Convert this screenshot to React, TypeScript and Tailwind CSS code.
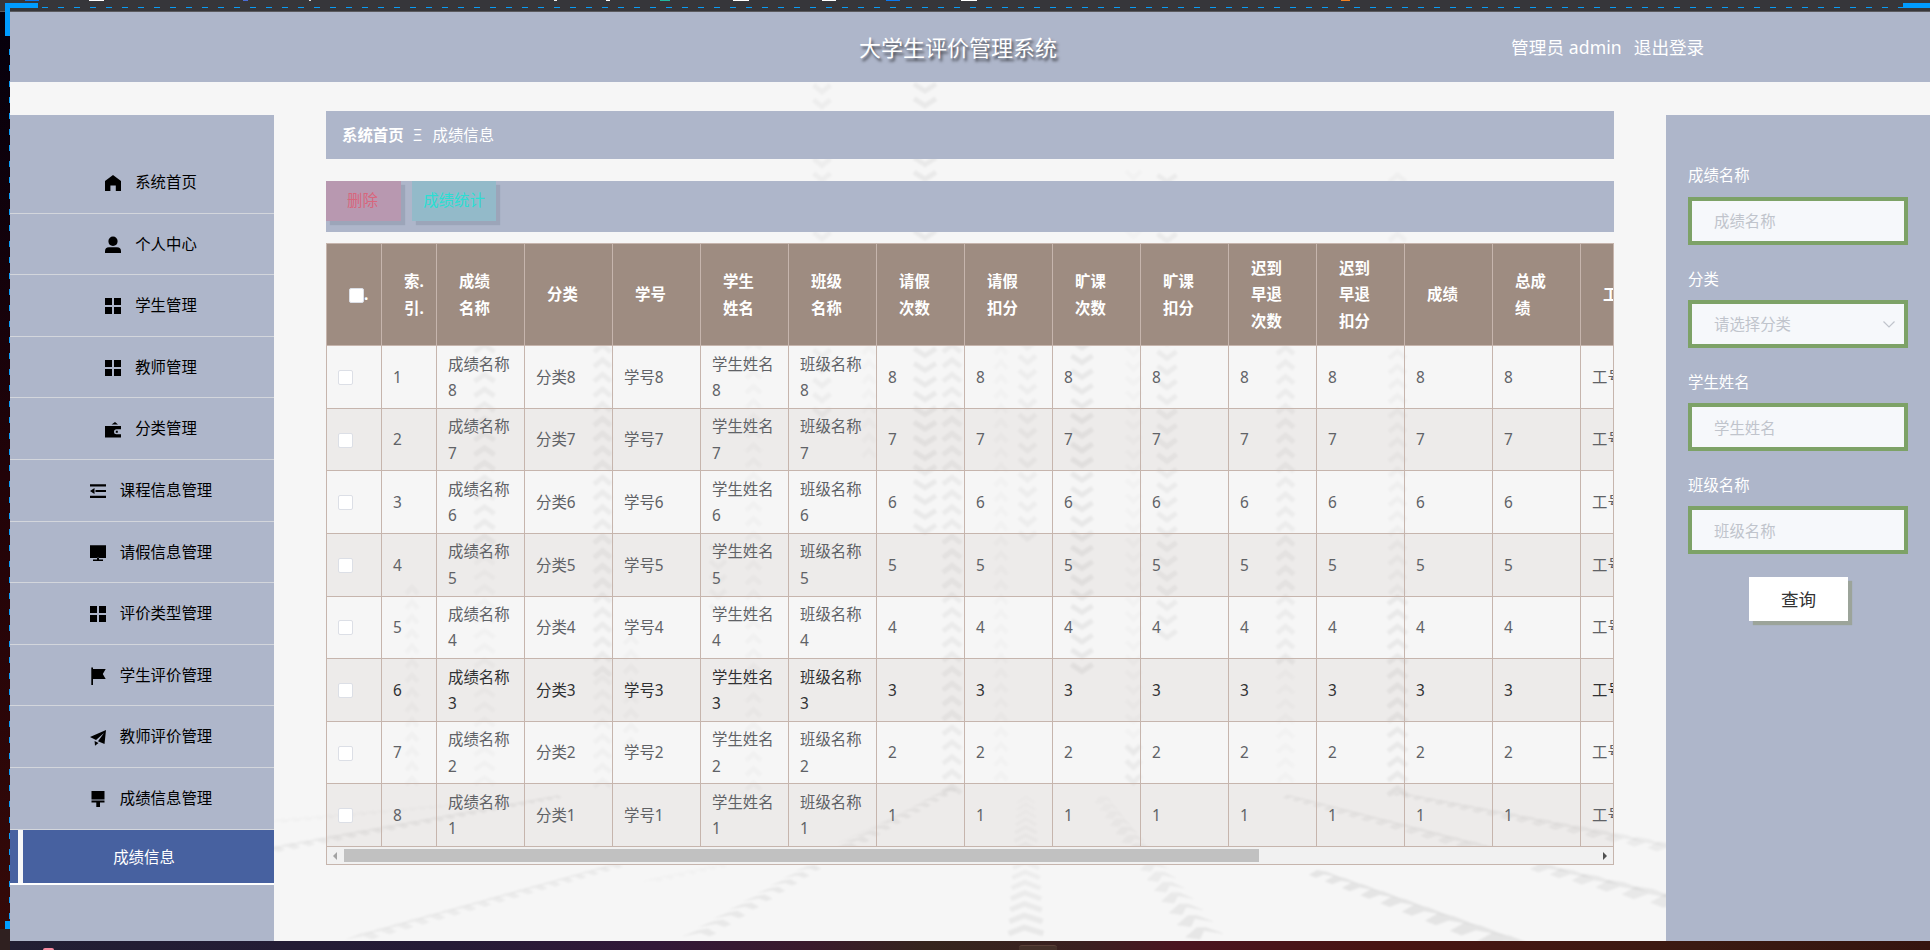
import { useState } from "react";
import type { ReactNode } from "react";

type MenuItem = { label: string; icon: ReactNode };

const grid = <path d="M0 0h7v7H0zM9 0h7v7H9zM0 9h7v7H0zM9 9h7v7H9z" />;

const menu: MenuItem[] = [
    { label: "系统首页", icon: <path d="M8 0 16 6V16H10.8V10.6H5.4V16H0V6Z" /> },
    {
        label: "个人中心",
        icon: <path d="M8-.5a4.600 4.600 0 0 1 4.600 4.800c0 2.800-1.900 4.700-4.600 4.700S3.400 7.100 3.400 4.300A4.600 4.600 0 0 1 8-.5ZM4 10.200h8a4 4 0 0 1 4 4V16H0v-1.800a4 4 0 0 1 4-4Z" />,
    },
    { label: "学生管理", icon: grid },
    { label: "教师管理", icon: grid },
    {
        label: "分类管理",
        icon: <path d="M6.500 2.500 10 0 13 2.500ZM0 4h16v3.300h-4.500a2.500 2.500 0 0 0 0 5H16V15.500H0ZM10.800 8.800h2v2h-2Z" />,
    },
    {
        label: "课程信息管理",
        icon: <path d="M0 1.300h16v2.200H0zM5.500 7h10.500v2H5.500zM0 12.700h16v2.200H0zM0 8 4.500 5V11Z" />,
    },
    { label: "请假信息管理", icon: <path d="M0 .3h16v12.700H0zM7 12.800h2v1.700h4V16H3v-1.500h4z" /> },
    { label: "评价类型管理", icon: grid },
    { label: "学生评价管理", icon: <path d="M1.300-.5H3V1H15.700L12.800 6 15.700 11H3V17H1.300Z" /> },
    { label: "教师评价管理", icon: <path d="M16 0 14.500 14 8 11.300 14 3 6 10 0 7ZM4.600 11 8.500 13 5 15.800Z" /> },
    { label: "成绩信息管理", icon: <path d="M1.500 0h13v8.500h-13zM1.500 9.500h13v2h-4.500V16H6.300v-4.500H1.500z" /> },
];

const headers = [
    ["成绩", "名称"],
    ["分类"],
    ["学号"],
    ["学生", "姓名"],
    ["班级", "名称"],
    ["请假", "次数"],
    ["请假", "扣分"],
    ["旷课", "次数"],
    ["旷课", "扣分"],
    ["迟到", "早退", "次数"],
    ["迟到", "早退", "扣分"],
    ["成绩"],
    ["总成", "绩"],
    ["工号"],
];

const rows = [8, 7, 6, 5, 4, 3, 2, 1];

// x, first y, last y, width, direction (1 = down, -1 = up), opacity
const columns: number[][] = [
    [822, 89, 440, 17, 1, 0.035],
    [925, 88, 535, 22, 1, 0.05],
    [484.5, 348, 560, 20, -1, 0.045],
    [484.5, 560, 790, 20, -1, 0.018],
    [602.5, 348, 680, 17, -1, 0.045],
    [602.5, 680, 790, 17, -1, 0.022],
    [753.5, 345, 790, 15, -1, 0.02],
    [869, 350, 465, 13, -1, 0.015],
    [952, 348, 795, 18, -1, 0.045],
    [412, 590, 790, 12, -1, 0.018],
    [718, 550, 615, 16, 1, 0.025],
    [631, 640, 755, 14, -1, 0.018],
    [1001, 350, 785, 13, -1, 0.016],
    [1027.5, 345, 548, 17, 1, 0.035],
    [1082, 345, 672, 21, 1, 0.055],
    [1133.5, 175, 750, 15, 1, 0.014],
    [1133.5, 750, 792, 15, 1, 0.045],
    [1167, 179, 645, 19, 1, 0.045],
    [1285.5, 350, 660, 17, -1, 0.04],
    [1285.5, 660, 790, 17, -1, 0.016],
    [1397.5, 178, 600, 17, -1, 0.026],
    [1397.5, 600, 792, 19, -1, 0.05],
];

// x1, y1, x2, y2, mark size at start, at end, opacity
const trails: number[][] = [
    [560, 797, 276, 850, 14, 26, 0.035],
    [460, 805, 276, 822, 14, 20, 0.012],
    [620, 866, 360, 940, 20, 30, 0.035],
    [725, 866, 660, 880, 16, 20, 0.014],
    [955, 790, 820, 866, 16, 24, 0.04],
    [818, 868, 700, 940, 22, 30, 0.045],
    [905, 815, 845, 845, 14, 18, 0.014],
    [1285, 797, 1480, 850, 16, 34, 0.035],
    [1395, 794, 1670, 850, 16, 40, 0.035],
    [1313, 874, 1490, 942, 28, 52, 0.06],
    [1535, 868, 1700, 912, 34, 60, 0.045],
];

function Backdrop() {
    const marks: ReactNode[] = [];

    columns.forEach(([x, y1, y2, w, dir, opacity], c) => {
        for (let y = y1, i = 0; y <= y2; y += 14.7, i++) {
            const h = w / 2;
            marks.push(
                <path
                    key={`c${c}-${i}`}
                    d={`M${x - h} ${y - dir * 4}L${x} ${y + dir * 3}L${x + h} ${y - dir * 4}`}
                    strokeWidth={5}
                    opacity={opacity}
                />
            );
        }
    });

    // slanted tracks: a heavy heel with a thin streak leading away from it
    trails.forEach(([x1, y1, x2, y2, s1, s2, opacity], t) => {
        const length = Math.hypot(x2 - x1, y2 - y1);
        const sign = x2 > x1 ? 1 : -1;
        for (let d = 0, i = 0; d < length; i++) {
            const k = d / length;
            const s = s1 + (s2 - s1) * k;
            const x = x1 + (x2 - x1) * k;
            const y = y1 + (y2 - y1) * k;
            const p = (dx: number, dy: number) => `${x + sign * s * dx} ${y + s * dy}`;
            marks.push(
                <path
                    key={`t${t}-${i}`}
                    d={`M${p(-0.15, 0.03)}L${p(0.15, -0.14)}L${p(0.5, -0.08)}L${p(1.05, 0.14)}L${p(0.4, 0.02)}L${p(0.1, 0.13)}Z`}
                    fill="#000"
                    stroke="none"
                    opacity={opacity * 1.2}
                />
            );
            d += s * 0.62;
        }
    });

    // the two tracks running towards the viewer
    for (let i = 0, y = 800; y < 940; i++) {
        const k = (y - 800) / 140;
        const h = 9 + 9 * k;
        marks.push(
            <path key={`m${i}`} d={`M${1026 - h} ${y + 3}L${1026 - k * 2} ${y - 3}L${1026 + h} ${y + 3}`} strokeWidth={3 + 3 * k} opacity={0.012 + 0.045 * k} />
        );
        const x = 1100 + 105 * k;
        marks.push(
            <path
                key={`n${i}`}
                d={`M${x - 5 - 8 * k} ${y + 3 + k * 4}L${x - 1} ${y - 3}L${x + 8} ${y - 3}L${x + 12 + 14 * k} ${y + 3}L${x + 6} ${y}L${x + 2} ${y + 4 + 5 * k}Z`}
                fill="#000"
                strokeWidth={0.5}
                opacity={0.015 + 0.05 * k}
            />
        );
        y += 7 + 6 * k;
    }

    return (
        <svg className="absolute inset-0 h-full w-full blur-[1px]" viewBox="0 0 1930 950" fill="none" stroke="#000">
            {marks}
        </svg>
    );
}

function Checkbox() {
    return <span className="block h-[15px] w-[15px] shrink-0 rounded-[2px] border border-[#dcdfe6] bg-white" />;
}

function Sidebar() {
    return (
        <aside className="mt-[33px] w-[264px] shrink-0 bg-[#aeb6ca] pt-[37px]">
            {menu.map((item) => (
                <div key={item.label} className="flex h-[61.6px] items-center justify-center gap-[14px] border-b border-[#d3d6dc] pt-[2px] pl-[18px] text-black">
                    <svg className="h-4 w-4 overflow-visible" viewBox="0 0 16 16" fill="currentColor" fillRule="evenodd">
                        {item.icon}
                    </svg>
                    <span>{item.label}</span>
                </div>
            ))}
            <div className="flex h-[55.5px] border-b-2 border-white bg-[#4761a0]">
                <div className="ml-2 w-[5px] bg-[#f8f8f8]" />
                <div className="flex flex-1 items-center justify-center pt-[3px] pr-[9px] text-white">成绩信息</div>
            </div>
        </aside>
    );
}

function ScoreTable() {
    return (
        <div className="mt-[11px] h-[622px] overflow-hidden border border-[#c6b5ad]">
            <div className="flex h-[102.2px] w-[1500px] bg-[#9e8c81] font-bold text-white">
                <div className="flex w-[55px] shrink-0 items-center border-r border-b border-[#c6b5ad] pt-[2px] pl-[22px]">
                    <Checkbox />
                    <span>.</span>
                </div>
                <div className="flex w-[55px] shrink-0 items-center border-r border-b border-[#c6b5ad] pt-[2px] pl-[22px]">
                    <div>
                        <p>索.</p>
                        <p>引.</p>
                    </div>
                </div>
                {headers.map((lines, i) => (
                    <div key={i} className="flex w-[88px] shrink-0 items-center border-r border-b border-[#c6b5ad] pt-[2px] pl-[22px]">
                        <div>
                            {lines.map((line) => (
                                <p key={line}>{line}</p>
                            ))}
                        </div>
                    </div>
                ))}
            </div>
            {rows.map((n, i) => {
                const values = [`成绩名称${n}`, `分类${n}`, `学号${n}`, `学生姓名${n}`, `班级名称${n}`, n, n, n, n, n, n, n, n, `工号${n}`];
                return (
                    <div
                        key={n}
                        className={`flex h-[62.6px] w-[1500px] ${i % 2 ? "bg-[#9e8c81]/10" : ""} ${i === 5 ? "text-[#303133]" : "text-[#606266]"}`}
                    >
                        <div className="flex w-[55px] shrink-0 items-center border-r border-b border-[#c6b5ad] pt-px pl-[11px]">
                            <Checkbox />
                        </div>
                        <div className="flex w-[55px] shrink-0 items-center border-r border-b border-[#c6b5ad] pt-[2px] pl-[11px]">{i + 1}</div>
                        {values.map((value, c) => (
                            <div key={c} className="flex w-[88px] shrink-0 items-center border-r border-b border-[#c6b5ad] px-[11px] pt-[2px]">
                                <span className="w-full break-all">{value}</span>
                            </div>
                        ))}
                    </div>
                );
            })}
            <div className="flex h-[18px] items-center justify-between bg-[#f1f1f1] px-[6px]">
                <div className="flex items-center gap-[7px]">
                    <svg className="h-2 w-1" viewBox="0 0 4 8" fill="#a3a3a3">
                        <path d="M4 0V8L0 4Z" />
                    </svg>
                    <div className="h-[13px] w-[915px] bg-[#c1c1c1]" />
                </div>
                <svg className="h-2 w-1" viewBox="0 0 4 8" fill="#505050">
                    <path d="M0 0V8L4 4Z" />
                </svg>
            </div>
        </div>
    );
}

const inputClass =
    "mt-[7px] block h-[48px] w-[220px] border-4 border-[#7da267] bg-[#f6f8fb] pt-[2px] pl-[22px] outline-none placeholder:text-[#c0c4cc]";

function SearchPanel() {
    const [form, setForm] = useState({ score: "", student: "", clazz: "" });

    return (
        <aside className="mt-[33px] w-[264px] shrink-0 bg-[#aeb6ca] px-[22px] pt-[48.4px] text-white">
            <div className="h-[103.2px]">
                <label className="block">成绩名称</label>
                <input className={inputClass} placeholder="成绩名称" value={form.score} onChange={(e) => setForm({ ...form, score: e.target.value })} />
            </div>
            <div className="h-[103.2px]">
                <label className="block">分类</label>
                <div className="mt-[7px] flex h-[48px] w-[220px] items-center justify-between border-4 border-[#7da267] bg-[#f6f8fb] pt-[2px] pr-[9px] pl-[22px] text-[#c0c4cc]">
                    请选择分类
                    <svg className="h-[7px] w-3" viewBox="0 0 12 7" fill="none" stroke="currentColor" strokeWidth="1.2">
                        <path d="M.5.5 6 6 11.500.5" />
                    </svg>
                </div>
            </div>
            <div className="h-[103.2px]">
                <label className="block">学生姓名</label>
                <input className={inputClass} placeholder="学生姓名" value={form.student} onChange={(e) => setForm({ ...form, student: e.target.value })} />
            </div>
            <div className="h-[103.2px]">
                <label className="block">班级名称</label>
                <input className={inputClass} placeholder="班级名称" value={form.clazz} onChange={(e) => setForm({ ...form, clazz: e.target.value })} />
            </div>
            <button className="mt-[1px] ml-[61px] block h-[44px] w-[99px] bg-white text-[17.6px] text-[#333] shadow-[4px_4px_1px_#9ca49a]">查询</button>
        </aside>
    );
}

export default function App() {
    return (
        <div className="relative flex h-[950px] w-[1930px] flex-col overflow-hidden bg-[#36363a] font-['Noto_Sans','Noto_Sans_CJK_SC',sans-serif] text-[15.4px] leading-[26.4px]">
            {/* Window strip above the page */}
            <div className="flex h-3 shrink-0 items-start border-b border-[#5b5b5f] pl-[25px]">
                <i className="h-px w-[14px] bg-[#0a78f0]" />
                <i className="ml-[50px] h-px w-[15px] bg-white" />
                <i className="ml-[139px] h-px w-[5px] bg-[#4a6cd8]" />
                <i className="ml-[61px] h-px w-[2px] bg-[#ddd]" />
                <i className="ml-[243px] h-px w-[3px] bg-[#eee]" />
                <i className="ml-[49px] h-px w-[4px] bg-white" />
                <i className="ml-[50px] h-px w-[10px] bg-[#22b8a0]" />
                <i className="ml-[63px] h-px w-[16px] bg-white" />
                <i className="ml-[73px] h-px w-[14px] bg-white" />
                <i className="ml-[50px] h-px w-[14px] bg-[#0a78f0]" />
                <i className="ml-[61px] h-px w-[16px] bg-white" />
                <i className="ml-[364px] h-px w-[9px] bg-[#f58220]" />
            </div>

            <div className="flex min-h-0 flex-1">
                <div className="w-[10px] shrink-0 bg-linear-to-b from-[#06000c] via-[#220308] via-50% to-[#350a08]" />
                <div className="relative flex min-w-0 flex-1 flex-col bg-[#f6f6f6]">
                    <div className="absolute -top-3 -left-[10px] h-[950px] w-[1930px]">
                        <Backdrop />
                    </div>

                    <header className="relative flex h-[70px] shrink-0 items-center bg-[#aeb6ca] text-white">
                        <h1 className="ml-[849px] w-[198px] text-[22px] whitespace-nowrap [text-shadow:2px_3px_3px_rgba(0,0,0,0.6)]">大学生评价管理系统</h1>
                        <div className="ml-[454px] flex gap-[12px] text-[17.6px]">
                            <span className="tracking-[0.1px]">管理员 admin</span>
                            <span>退出登录</span>
                        </div>
                    </header>

                    <div className="relative flex min-h-0 flex-1">
                        <Sidebar />
                        <main className="mr-[52px] ml-[52px] w-[1288px] shrink-0 pt-[29px]">
                            <nav className="flex h-12 items-center bg-[#aeb6ca] pt-[2px] pl-4 text-white">
                                <span className="font-bold">系统首页</span>
                                <span className="w-7 text-center">Ξ</span>
                                <span className="pl-px">成绩信息</span>
                            </nav>
                            <div className="mt-[22px] flex h-[51px] gap-[11px] bg-[#aeb6ca]">
                                <button className="h-10 w-[75px] bg-[#b898b0] pr-[2px] text-[#d8667c] shadow-[4px_4px_1px_#9ca5b9]">删除</button>
                                <button className="h-10 w-[84px] bg-[#93bac9] text-[#2adfd3] shadow-[4px_4px_1px_#9ca5b9]">成绩统计</button>
                            </div>
                            <ScoreTable />
                        </main>
                        <SearchPanel />
                    </div>
                </div>
            </div>

            {/* Taskbar edge */}
            <div className="relative flex h-[9px] shrink-0 items-end overflow-hidden bg-[linear-gradient(90deg,#211e33,#251b36_23%,#321838_34%,#3a1a2c_42%,#35251d_48%,#3a2020_56%,#4a1420_61%,#481412_72%,#3a1a12_88%,#35140f)]">
                <i className="ml-[43px] h-[2px] w-[11px] rounded-t-full bg-[#f58aa0]" />
                <i className="ml-[965px] h-[5px] w-[38px] rounded-t-[3px] border-t border-[#5a4038] bg-[#443029]" />
            </div>

            {/* Selection frame around the window */}
            <div className="absolute top-[7px] left-[42px] h-px w-[1861px] bg-[repeating-linear-gradient(90deg,#0a9cf5_0_6px,transparent_6px_16px)]" />
            <div className="absolute top-[49px] left-[9px] h-[872px] w-px bg-[repeating-linear-gradient(180deg,#0a9cf5_0_6px,transparent_6px_16px)]" />
            <div className="absolute top-[3px] left-[5px] h-[5px] w-[33px] bg-[#009cff]" />
            <div className="absolute top-[3px] left-[5px] h-[33px] w-[5px] bg-[#009cff]" />
            <div className="absolute top-[3px] right-0 h-[5px] w-[27px] bg-[#009cff]" />
            <div className="absolute top-[921px] left-[5px] h-2 w-[5px] bg-[#009cff]" />
            <div className="absolute top-[929px] left-0 h-[21px] w-[10px] bg-[#2f2020]" />
        </div>
    );
}
